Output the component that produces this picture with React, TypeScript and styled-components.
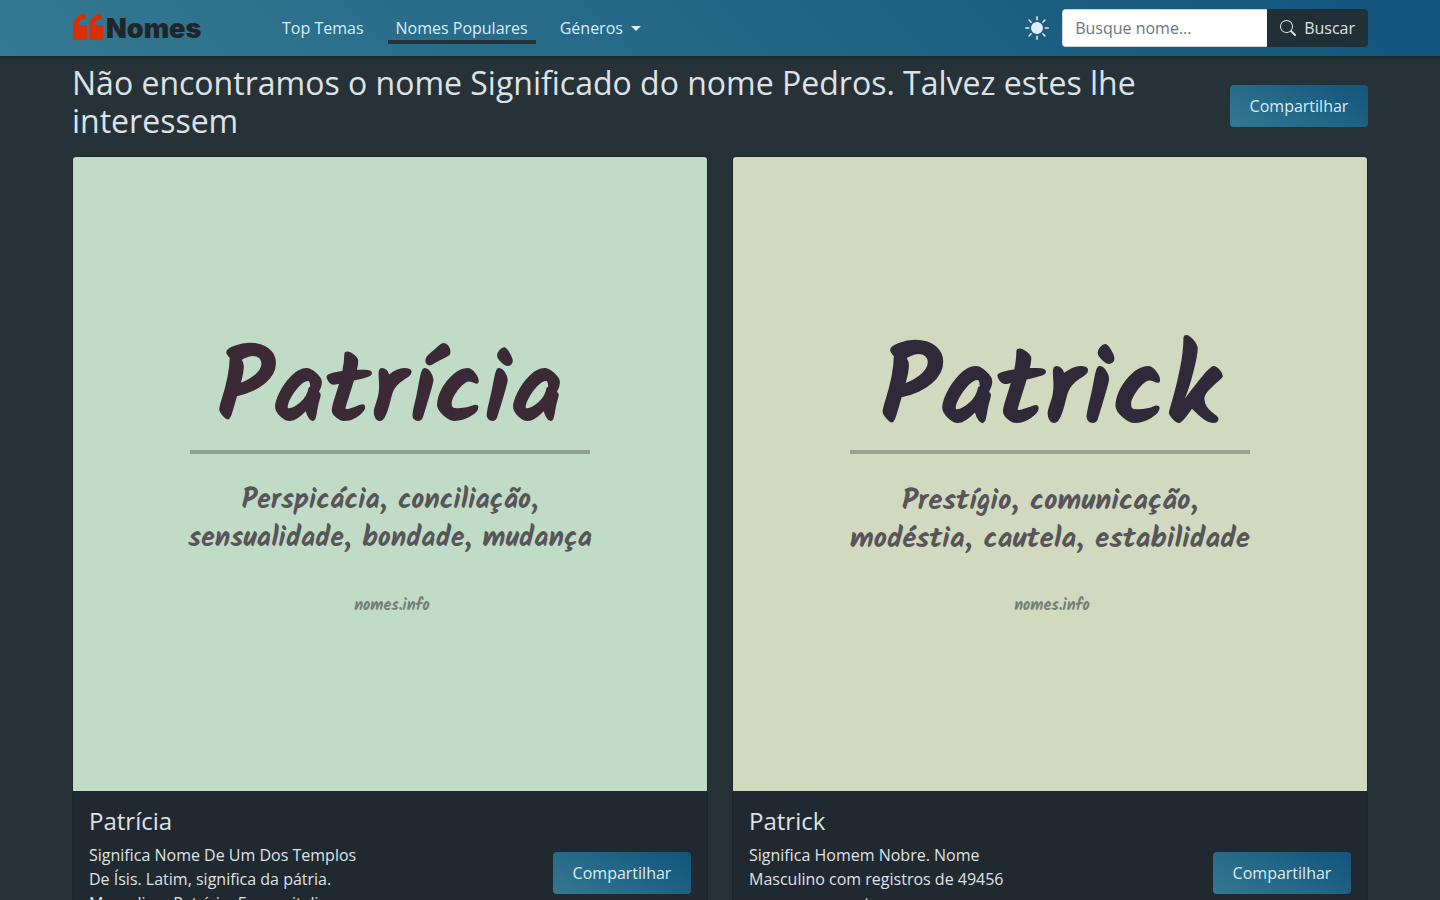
import React from 'react';
import styled, { createGlobalStyle } from 'styled-components';
import { BsSearch, BsSunFill } from 'react-icons/bs';

const GlobalStyle = createGlobalStyle`
  *, *::before, *::after { box-sizing: border-box; }
  body {
    margin: 0;
    background: #263238;
    color: #dee2e6;
    font: 400 16px/24px 'Open Sans', sans-serif;
  }
  h1, h2, p { margin: 0; font-weight: 400; }
`;

const Header = styled.header`
  position: sticky;
  top: 0;
  z-index: 2;
  background: linear-gradient(45deg, #347891, #12547c);
  box-shadow: 0 2px 4px rgba(0, 0, 0, 0.2);
`;

const Container = styled.div`
  max-width: 1320px;
  margin: 0 auto;
  padding: 0 12px;
`;

const Bar = styled(Container)`
  display: flex;
  align-items: center;
  height: 56px;
`;

const Brand = styled.a`
  display: flex;
  align-items: center;
  gap: 2px;
  width: 202px;
  padding-top: 2px;
  color: #212529;
  font: 900 27px/32px Inter, sans-serif;
  text-decoration: none;
  svg { margin-bottom: 4px; }
`;

const Nav = styled.nav`
  display: flex;
  gap: 16px;
  flex: 1;
`;

const NavLink = styled.a<{ $active?: boolean }>`
  display: flex;
  align-items: center;
  padding: 4px 8px 0;
  border-bottom: 4px solid ${(p) => (p.$active ? '#263238' : 'transparent')};
  color: #d9edf5;
  text-decoration: none;
`;

const Caret = styled.span`
  margin-left: 8px;
  border: 5px solid transparent;
  border-top-color: currentColor;
  border-bottom: 0;
`;

const ThemeButton = styled.button`
  display: flex;
  margin-right: 13px;
  padding: 0;
  border: 0;
  background: none;
  color: #e1eef4;
`;

const SearchForm = styled.form`
  display: flex;
  height: 38px;
`;

const SearchInput = styled.input`
  width: 205px;
  padding: 6px 12px;
  border: 1px solid #ced4da;
  border-right: 0;
  border-radius: 4px 0 0 4px;
  background: #fff;
  color: #212529;
  font: inherit;
  &::placeholder { color: #6c757d; opacity: 1; }
`;

const SearchButton = styled.button`
  display: flex;
  align-items: center;
  gap: 8px;
  padding: 6px 13px;
  border: 0;
  border-radius: 0 4px 4px 0;
  background: #212f36;
  color: #dee2e6;
  font: inherit;
`;

const TitleRow = styled.div`
  display: flex;
  align-items: center;
  justify-content: space-between;
  gap: 24px;
  padding: 8px 0 16px;
`;

const Title = styled.h1`
  font-size: 32px;
  line-height: 38px;
`;

const ShareButton = styled.button`
  flex: none;
  min-width: 138px;
  height: 42px;
  margin-top: 8px;
  padding: 0 16px;
  border: 0;
  border-radius: 4px;
  background: linear-gradient(30deg, #347891, #12547c);
  color: #d9edf5;
  font: inherit;
`;

const Grid = styled.div`
  display: grid;
  grid-template-columns: 1fr 1fr;
  gap: 24px;
`;

const Card = styled.article`
  overflow: hidden;
  border: 1px solid #1e262b;
  border-radius: 4px;
  background: #212930;
`;

const Cover = styled.div<{ $bg: string }>`
  display: flex;
  flex-direction: column;
  align-items: center;
  aspect-ratio: 1;
  padding-top: 183px;
  background: ${(p) => p.$bg};
  font-family: Kalam, Lato, sans-serif;
  font-weight: 700;
  text-align: center;
`;

const CoverName = styled.div<{ $color: string; $size: number }>`
  color: ${(p) => p.$color};
  font-size: ${(p) => p.$size}px;
  line-height: 110px;
`;

const Rule = styled.hr`
  width: 400px;
  max-width: 100%;
  height: 4px;
  margin: 0;
  border: 0;
  background: rgba(60, 50, 60, 0.35);
`;

const Traits = styled.div<{ $size: number }>`
  margin-top: 28px;
  color: #58555a;
  font-size: ${(p) => p.$size}px;
  line-height: 38px;
  white-space: pre-line;
`;

const Site = styled.div`
  margin-top: 36px;
  padding-left: 4px;
  color: #757f79;
  font-size: 16px;
  line-height: 24px;
`;

const CardBody = styled.div`
  padding: 16px;
`;

const CardTitle = styled.h2`
  margin-bottom: 8px;
  font-size: 24px;
  line-height: 28px;
`;

const CardRow = styled.div`
  display: flex;
  align-items: flex-start;
  justify-content: space-between;
`;

const CardText = styled.p`
  max-width: 280px;
`;

const CardShare = styled(ShareButton)`
  margin-top: 9px;
`;

const names = [
  {
    name: 'Patrícia', bg: '#c0dbc6', color: '#3b2935', nameSize: 102, traitSize: 28,
    traits: 'Perspicácia, conciliação,\nsensualidade, bondade, mudança',
    text: 'Significa Nome De Um Dos Templos De Ísis. Latim, significa da pátria. Masculino: Patrício. Em capitalino.',
  },
  {
    name: 'Patrick', bg: '#d1dabf', color: '#30293a', nameSize: 109, traitSize: 29,
    traits: 'Prestígio, comunicação,\nmodéstia, cautela, estabilidade',
    text: 'Significa Homem Nobre. Nome Masculino com registros de 49456 pessoas somente.',
  },
];

const quoteMark = 'M12 0C5 0 0 4.5 0 12v11a3 3 0 0 0 3 3h8a3 3 0 0 0 3-3v-9a3 3 0 0 0-3-3H5.5C5.5 7.5 8 5.3 11 5Q12.5 4.8 12.5 3.3V1.5Q12.5 0 12 0Z';

function QuoteLogo() {
  return (
    <svg width="32" height="26" viewBox="-1 0 32 26" fill="#d92d05" aria-hidden="true">
      <path d={quoteMark} />
      <path d={quoteMark} transform="translate(16.5 0)" />
    </svg>
  );
}

export default function App() {
  return (
    <>
      <GlobalStyle />
      <Header>
        <Bar>
          <Brand href="#"><QuoteLogo />Nomes</Brand>
          <Nav>
            <NavLink href="#temas">Top Temas</NavLink>
            <NavLink href="#populares" $active>Nomes Populares</NavLink>
            <NavLink href="#generos">Géneros<Caret /></NavLink>
          </Nav>
          <ThemeButton aria-label="Tema"><BsSunFill size={24} /></ThemeButton>
          <SearchForm>
            <SearchInput aria-label="Busque nome" placeholder="Busque nome..." />
            <SearchButton type="button"><BsSearch size={16} />Buscar</SearchButton>
          </SearchForm>
        </Bar>
      </Header>
      <Container as="main">
        <TitleRow>
          <Title>Não encontramos o nome Significado do nome Pedros. Talvez estes lhe interessem</Title>
          <ShareButton>Compartilhar</ShareButton>
        </TitleRow>
        <Grid>
          {names.map((n) => (
            <Card key={n.name}>
              <Cover $bg={n.bg}>
                <CoverName $color={n.color} $size={n.nameSize}>{n.name}</CoverName>
                <Rule />
                <Traits $size={n.traitSize}>{n.traits}</Traits>
                <Site>nomes.info</Site>
              </Cover>
              <CardBody>
                <CardTitle>{n.name}</CardTitle>
                <CardRow>
                  <CardText>{n.text}</CardText>
                  <CardShare>Compartilhar</CardShare>
                </CardRow>
              </CardBody>
            </Card>
          ))}
        </Grid>
      </Container>
    </>
  );
}
